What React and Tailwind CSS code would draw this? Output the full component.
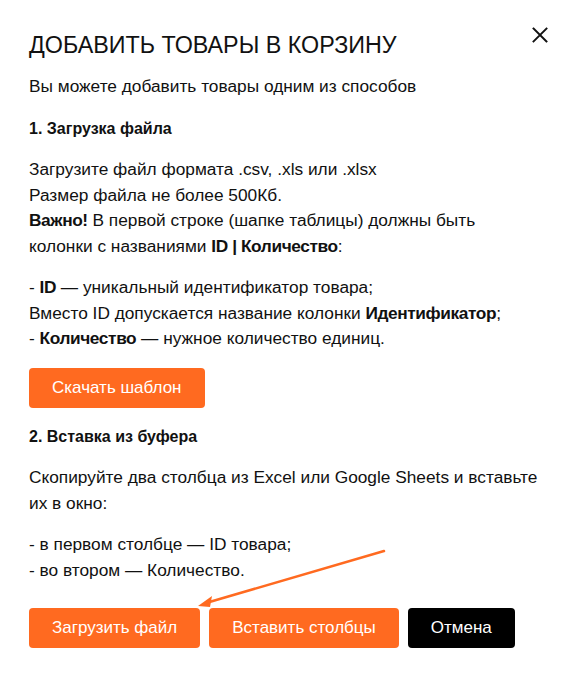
export default function App() {
  const btn = "h-10 rounded-[4px] px-[23px] text-[17px] text-white bg-[#ff6a20]";
  const b = "font-bold tracking-[-0.4px]";

  return (
    <div className="relative min-h-[679px] w-[574px] bg-white text-[#111] font-['Liberation_Sans',Arial,sans-serif]">
      <button className="absolute left-[531px] top-[26px] w-[18px] h-[18px]" aria-label="close">
        <svg viewBox="0 0 18 18" width="18" height="18" fill="none" stroke="#111" strokeWidth="1.9" strokeLinecap="square">
          <path d="M2.5 2.5 L15.5 15.5 M15.5 2.5 L2.5 15.5" />
        </svg>
      </button>

      <div className="px-[29px] pt-[29px] text-[17.3px] leading-[25.5px]">
        <h2 className="text-[23.3px] leading-[32px] font-normal mb-[13px]">ДОБАВИТЬ ТОВАРЫ В КОРЗИНУ</h2>

        <p className="mb-4">Вы можете добавить товары одним из способов</p>
        <h3 className="font-bold text-[16px] mb-4">1. Загрузка файла</h3>

        <p className="mb-4">
          Загрузите файл формата .csv, .xls или .xlsx
          <br />
          Размер файла не более 500Кб.
          <br />
          <b className={b}>Важно!</b> В первой строке (шапке таблицы) должны быть
          <br />
          колонки с названиями <b className={b}>ID | Количество</b>:
        </p>

        <p className="mb-4">
          - <b className={b}>ID</b> — уникальный идентификатор товара;
          <br />
          Вместо ID допускается название колонки <b className={b}>Идентификатор</b>;
          <br />
          - <b className={b}>Количество</b> — нужное количество единиц.
        </p>

        <button className={btn + " mb-4"}>Скачать шаблон</button>

        <h3 className="font-bold text-[16px] mb-4">2. Вставка из буфера</h3>

        <p className="mb-4">
          Скопируйте два столбца из Excel или Google Sheets и вставьте
          <br />
          их в окно:
        </p>

        <p className="mb-[25px]">
          - в первом столбце — ID товара;
          <br />
          - во втором — Количество.
        </p>

        <div className="flex gap-[9px]">
          <button className={btn}>Загрузить файл</button>
          <button className={btn}>Вставить столбцы</button>
          <button className="h-10 rounded-[4px] px-[23px] text-[17px] text-white bg-black">Отмена</button>
        </div>
      </div>

      <svg className="absolute left-0 top-0 pointer-events-none" width="574" height="679">
        <line x1="384" y1="551" x2="206" y2="603" stroke="#ff6a20" strokeWidth="2.5" strokeLinecap="round" />
        <path d="M198 606 L212 596 L210 607 Z" fill="#ff6a20" />
      </svg>
    </div>
  );
}
